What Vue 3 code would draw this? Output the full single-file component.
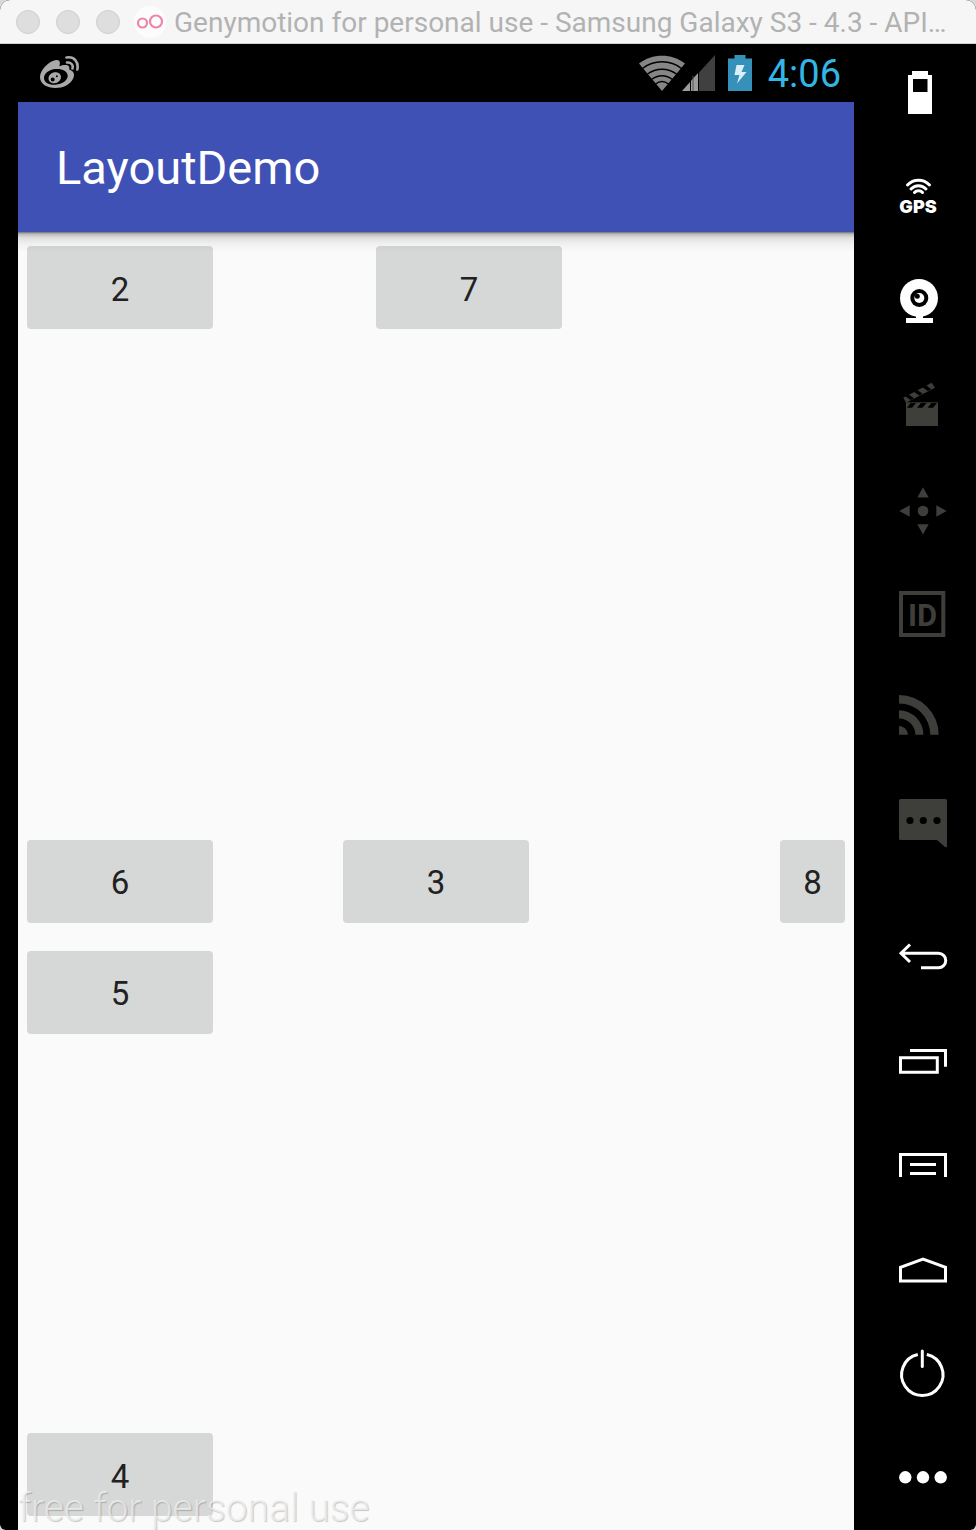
<script setup>
const windowTitle = 'Genymotion for personal use - Samsung Galaxy S3 - 4.3 - API…'
</script>

<template>
  <div class="window">
    <header class="titlebar">
      <div class="lights">
        <button class="light" type="button" aria-label="Close"></button>
        <button class="light" type="button" aria-label="Minimize"></button>
        <button class="light" type="button" aria-label="Zoom"></button>
      </div>
      <svg class="logo" width="32" height="32" viewBox="0 0 32 32" aria-hidden="true">
        <circle cx="16" cy="16" r="16" fill="#fcfcfc" />
        <g fill="none" stroke="#ee84a9" stroke-width="2.200">
          <circle cx="8.500" cy="17" r="4.500" />
          <circle cx="22" cy="15.500" r="6" />
        </g>
      </svg>
      <h1 class="window-title">{{ windowTitle }}</h1>
    </header>

    <div class="body">
      <main class="device">
        <div class="statusbar">
          <svg class="weibo" width="42" height="36" viewBox="0 0 42 36" aria-hidden="true">
            <path fill="#a9a9a9" fill-rule="evenodd" d="M1 22C1 15 10 6 17 5c4-.6 4.600 2.500 3.300 6.300C26 9 31.500 9.500 30.200 14.500c4.800 1.500 5.800 5 4 9C31 30 24 33 16.500 33 8 33 1 29 1 22Z M5 23c0 4.500 5 7.200 11.500 6.700 7-.5 12.500-4.500 12.200-9.200C28.300 16 23 13.400 16.500 14 10 14.500 5 18.500 5 23Z" />
            <path fill="#a9a9a9" fill-rule="evenodd" d="M9.500 23.500c0-4 4-6.700 7.700-6.300 3.500.4 5.500 3.200 4.600 6.300-1 3.500-4.800 5.300-8.200 4.700-2.500-.5-4.100-2.400-4.100-4.700Z M11.700 24.500a2 2 0 1 0 4 0 2 2 0 1 0-4 0Z M16.800 21.300a1 1 0 1 0 2 0 1 1 0 1 0-2 0Z" />
            <path fill="none" stroke="#a9a9a9" stroke-width="2.600" stroke-linecap="round" d="M27.500 2.500C35 1 40 7 38.300 14.500M28 7.500c4-.5 6.500 2.500 5.500 6" />
          </svg>
          <div class="indicators">
            <svg width="46" height="38" viewBox="0 0 46 38" aria-hidden="true">
              <path fill="#868686" d="M0 9.500C13-1 33-1 46 9.500L23 37Z" />
              <path fill="none" stroke="#000" stroke-width="1.500" d="M3.500 14.500c11-9 28-9 39 0M8.500 20c8.500-6.500 20.500-6.500 29 0M12.500 25.500c6.500-5 14.500-5 21 0M16.500 30c4-3 9-3 13 0" />
            </svg>
            <svg class="signal" width="34" height="38" viewBox="0 0 34 38" aria-hidden="true">
              <path fill="#404040" d="M17 18.500 33 1v36H17Z" />
              <path fill="#9b9b9b" d="M0 37 16 19v18Z" />
              <path stroke="#000" stroke-width="1" d="M8.500 22v15M16.500 16v21" />
              <path stroke="#555" stroke-width="1" d="M11 22v15" />
            </svg>
            <svg class="charge" width="24" height="38" viewBox="0 0 24 38" aria-hidden="true">
              <path fill="#3591b9" d="M0 4.500h6.500V1h11v3.500H24V37H0Z" />
              <path fill="#dceff6" d="M8.500 11h8l-3 7h5L9 29.500 11.500 21H6.500Z" />
            </svg>
            <time class="clock">4:06</time>
          </div>
        </div>

        <div class="appbar"><h2>LayoutDemo</h2></div>

        <div class="content">
          <div class="top">
            <button class="tile" type="button">2</button>
            <button class="tile" type="button">7</button>
          </div>
          <div class="middle">
            <button class="tile" type="button">6</button>
            <button class="tile" type="button">3</button>
            <button class="tile small" type="button">8</button>
          </div>
          <div class="bottom">
            <button class="tile" type="button">5</button>
            <button class="tile" type="button">4</button>
          </div>
          <span class="watermark">free for personal use</span>
        </div>
      </main>

      <aside class="tools">
        <button type="button" aria-label="Battery">
          <svg viewBox="0 0 48 48"><path fill-rule="evenodd" d="M9 7h4V3h16v4h4v39H9Z M14 11v13h14.500V11Z" /></svg>
        </button>
        <button type="button" aria-label="GPS">
          <svg viewBox="0 0 48 48">
            <path class="line round" d="M8.500 13c6-6.500 16-6.500 22 0M12 17c4-4.500 11-4.500 15 0M15.500 20.500c2-2.500 6-2.500 8 0" />
            <text class="gps" x="19" y="41" text-anchor="middle">GPS</text>
          </svg>
        </button>
        <button type="button" aria-label="Camera">
          <svg viewBox="0 0 48 48">
            <circle cx="20" cy="22" r="19" />
            <path d="M17 38h7v4h10v5H7v-5h10Z" />
            <circle cx="20.300" cy="22" r="9" fill="#000" />
            <circle cx="20.300" cy="22" r="5" />
            <circle cx="18.300" cy="20.300" r="2.500" fill="#000" />
          </svg>
        </button>
        <button class="dim" type="button" aria-label="Screencast">
          <svg viewBox="0 0 48 48">
            <path d="M7 22.300h32V46H7Z" />
            <path d="M4.300 17.700 32.700 2.700 36 7.700 7 22.800Z" />
            <path fill="#000" d="M8 27.700 11.500 23h5.500l-4 4.700ZM18 27.700l4-4.700h5.500l-4 4.700ZM28.500 27.700l4-4.700H38l-4 4.700ZM6.300 16.200l3.400-1.800 5.300 3.900-3.400 1.800ZM14.800 11.800l3.600-1.900 5.200 3.900-3.500 1.800ZM23.500 7.200l3.600-1.900 5.200 3.900-3.500 1.800Z" />
          </svg>
        </button>
        <button class="dim" type="button" aria-label="Remote control">
          <svg viewBox="0 0 48 48">
            <circle cx="24" cy="27" r="5.300" />
            <path d="M24 3.300 29.700 13.500H18.300ZM24 50.500 18.300 40.300h11.400ZM.3 27l10.400-5.700v11.400ZM47.700 27l-10.400-5.700v11.400Z" />
          </svg>
        </button>
        <button class="dim" type="button" aria-label="Identifiers">
          <svg viewBox="0 0 48 48">
            <rect x="2" y="5" width="42.300" height="42" fill="none" stroke="currentColor" stroke-width="4" />
            <text class="ident" x="23.500" y="38" text-anchor="middle">ID</text>
          </svg>
        </button>
        <button class="dim" type="button" aria-label="Network">
          <svg viewBox="0 0 48 48">
            <path d="M0 3a39.700 39.700 0 0 1 39.700 39.700h-8.400A31.300 31.300 0 0 0 0 11.400ZM0 18.300a24.400 24.400 0 0 1 24.400 24.400h-8.100A16.300 16.300 0 0 0 0 26.400ZM0 34a9 9 0 0 1 9 8.700H0Z" />
          </svg>
        </button>
        <button class="dim" type="button" aria-label="Phone">
          <svg viewBox="0 0 48 48">
            <path d="M1.500 3h45A1.500 1.500 0 0 1 48 4.500V51h-2L38 44H1.500A1.500 1.500 0 0 1 0 42.500v-38A1.500 1.500 0 0 1 1.500 3Z" />
            <g fill="#000"><circle cx="11" cy="24.500" r="3.600" /><circle cx="24.300" cy="24.500" r="3.600" /><circle cx="38" cy="24.500" r="3.600" /></g>
          </svg>
        </button>
        <button class="nav-start" type="button" aria-label="Back">
          <svg viewBox="0 0 48 48"><path class="line" d="M2 20.200h37.500a7.200 7.200 0 0 1 0 14.500H22M11 11.500 2 20.200 11 29" /></svg>
        </button>
        <button type="button" aria-label="Recent apps">
          <svg viewBox="0 0 48 48"><path class="line" d="M1.500 20.700h36.800v14.600H1.500ZM11 13.500h35.500v16.200" /></svg>
        </button>
        <button type="button" aria-label="Menu">
          <svg viewBox="0 0 48 48"><path class="line" d="M1.500 36V13.500h45V36M11 23.500h26M11 32.500h26" /></svg>
        </button>
        <button type="button" aria-label="Home">
          <svg viewBox="0 0 48 48"><path class="line" d="M1.500 36V22.300L24 14l22.500 8.300V36Z" /></svg>
        </button>
        <button type="button" aria-label="Power">
          <svg viewBox="0 0 48 48">
            <path class="line" d="M18.800 5.500a20.700 20.700 0 1 0 9 0" />
            <path class="line round" d="M23.300 2v15.500" />
          </svg>
        </button>
        <button type="button" aria-label="More">
          <svg viewBox="0 0 48 48"><circle cx="6.300" cy="24.300" r="6.200" /><circle cx="24" cy="24.300" r="6.200" /><circle cx="41.700" cy="24.300" r="6.200" /></svg>
        </button>
      </aside>
    </div>
  </div>
</template>

<style>
body {
  margin: 0;
  background: #d8d8d8;
}
</style>

<style scoped>
* {
  box-sizing: border-box;
}
button {
  padding: 0;
  border: 0;
  font: inherit;
}
svg {
  display: block;
  flex: none;
}
.window {
  display: flex;
  flex-direction: column;
  min-height: 100vh;
  overflow: hidden;
  border-radius: 10px 10px 6px 6px;
  background: #000;
  font-family: Roboto, "Liberation Sans", sans-serif;
}
.titlebar {
  display: flex;
  align-items: center;
  height: 44px;
  padding: 0 16px;
  border-bottom: 1px solid #d0d0d0;
  background: #f6f6f6;
}
.lights {
  display: flex;
  gap: 16px;
}
.light {
  width: 24px;
  height: 24px;
  border: 1px solid #cecece;
  border-radius: 50%;
  background: #dedede;
}
.logo {
  margin: 0 8px 0 14px;
}
.window-title {
  flex: 1;
  min-width: 0;
  margin: 0;
  padding-top: 2px;
  overflow: hidden;
  color: #b2b2b2;
  font: 400 28px/40px Roboto, "Liberation Sans", sans-serif;
  text-overflow: ellipsis;
  white-space: nowrap;
}
.body {
  display: flex;
  flex: 1;
}
.device {
  display: flex;
  flex: 1;
  flex-direction: column;
  min-width: 0;
  padding-left: 18px;
}
.statusbar {
  display: flex;
  align-items: center;
  justify-content: space-between;
  height: 58px;
  padding: 0 13px 0 21px;
}
.indicators {
  display: flex;
  align-items: center;
}
.signal {
  margin-left: -3px;
}
.charge {
  margin: 0 16px 0 12px;
}
.clock {
  padding-top: 2px;
  color: #33b5e5;
  font-size: 38px;
  line-height: 56px;
}
.appbar {
  position: relative;
  z-index: 1;
  height: 130px;
  padding-left: 38px;
  background: #3f51b5;
}
.appbar::after {
  position: absolute;
  top: 100%;
  right: 0;
  left: 0;
  height: 20px;
  background: linear-gradient(rgba(0, 0, 0, 0.55), rgba(0, 0, 0, 0.25) 2px, rgba(0, 0, 0, 0.1) 6px, rgba(0, 0, 0, 0.04) 12px, transparent);
  content: "";
  pointer-events: none;
}
.appbar h2 {
  margin: 0;
  color: #fff;
  font-size: 47px;
  font-weight: 400;
  line-height: 132px;
}
.content {
  position: relative;
  display: grid;
  flex: 1;
  grid-template-rows: minmax(0, 1fr) auto minmax(0, 1fr);
  padding: 14px 9px;
  background: #fafafa;
}
.tile {
  width: 186px;
  height: 83px;
  padding-top: 4px;
  border-radius: 4px;
  background: #d6d7d7;
  color: #212121;
  font-size: 33px;
  line-height: 40px;
}
.small {
  width: 65px;
}
.top {
  display: flex;
  align-items: flex-start;
  gap: 163px;
}
.middle {
  display: grid;
  grid-template-columns: 1fr auto 1fr;
}
.middle .small {
  justify-self: end;
}
.bottom {
  display: flex;
  flex-direction: column;
  justify-content: space-between;
  padding-top: 28px;
}
.watermark {
  position: absolute;
  bottom: 0;
  left: 0;
  color: rgba(240, 240, 240, 0.75);
  font-size: 39px;
  font-weight: 300;
  line-height: 44px;
  text-shadow: 1px 1px 1px rgba(0, 0, 0, 0.2);
  pointer-events: none;
}
.tools {
  display: flex;
  flex: none;
  flex-direction: column;
  gap: 56px;
  width: 122px;
  padding: 24px 29px 24px 45px;
}
.tools button {
  width: 48px;
  height: 48px;
  background: none;
  color: #fff;
}
.tools .dim {
  color: #3e3e3a;
}
.tools .nav-start {
  margin-top: 33px;
}
.tools svg {
  width: 48px;
  height: 48px;
  overflow: visible;
  fill: currentColor;
}
.line {
  fill: none;
  stroke: currentColor;
  stroke-width: 3;
}
.round {
  stroke-linecap: round;
}
.gps {
  font: 900 18px Inter, "Liberation Sans", sans-serif;
}
.ident {
  font: 700 31px Roboto, "Liberation Sans", sans-serif;
}
</style>
